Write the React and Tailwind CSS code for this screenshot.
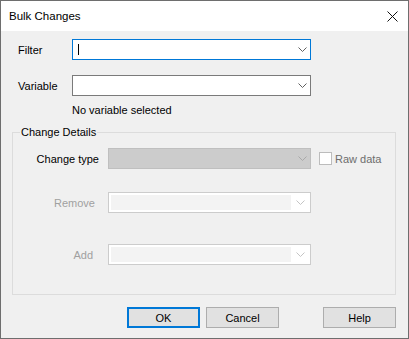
import React from 'react'

function Chevron({ color = '#606060' }) {
  return (
    <svg width="9" height="5" viewBox="0 0 9 5" className="block">
      <polyline points="0.5,0.5 4.5,4.5 8.5,0.5" fill="none" stroke={color} strokeWidth="1" />
    </svg>
  )
}

function Combo({ className = '', children, chevron }) {
  return (
    <div className={`h-[21px] flex items-center justify-between box-border ${className}`}>
      <div className="flex-1 h-full flex items-center">{children}</div>
      <div className="pr-[3px] pl-[2px]">
        <Chevron color={chevron} />
      </div>
    </div>
  )
}

function DisabledCombo() {
  return (
    <div className="w-[203px] h-[21px] border border-[#cccccc] bg-white flex items-center box-border p-[2px]">
      <div className="w-[180px] h-full bg-[#f3f3f3]" />
      <div className="flex-1 flex justify-center pl-[1px]">
        <Chevron color="#c4c4c4" />
      </div>
    </div>
  )
}

function Button({ children, primary }) {
  return (
    <button
      className={`w-[73px] h-[21px] bg-[#e1e1e1] box-border flex items-center justify-center text-black ${
        primary ? 'border-2 border-[#0078d7]' : 'border border-[#adadad]'
      }`}
    >
      {children}
    </button>
  )
}

export default function App() {
  return (
    <div className="w-[409px] h-[339px] border border-[#6e6e6e] bg-[#f0f0f0] flex flex-col box-border text-[11px] text-black font-['Liberation_Sans',Arial,sans-serif] leading-[14px]">
      {/* title bar */}
      <div className="h-[30px] bg-white flex items-center justify-between pl-[8px] pr-[10px]">
        <span className="text-[11.5px]">Bulk Changes</span>
        <svg width="11" height="11" viewBox="0 0 11 11">
          <path d="M0.5 0.5 L10.5 10.5 M10.5 0.5 L0.5 10.5" stroke="#111" strokeWidth="1" fill="none" />
        </svg>
      </div>

      <div className="flex-1 flex flex-col">
        {/* Filter */}
        <div className="mt-[8px] ml-[17px] flex items-center">
          <span className="w-[54px]">Filter</span>
          <Combo className="w-[239px] border border-[#0078d7] bg-white">
            <div className="ml-[5px] w-px h-[11px] bg-black" />
          </Combo>
        </div>

        {/* Variable */}
        <div className="mt-[15px] ml-[17px] flex items-center">
          <span className="w-[54px]">Variable</span>
          <Combo className="w-[239px] border border-[#7a7a7a] bg-white" />
        </div>

        <div className="mt-[7px] ml-[71px] h-[14px]">No variable selected</div>

        {/* Change Details group */}
        <div className="relative mt-[15px] ml-[11px] w-[384px] h-[163px] border border-[#dcdcdc] box-border flex flex-col">
          <span className="absolute left-[7px] top-[-8px] px-px bg-[#f0f0f0]">Change Details</span>

          <div className="mt-[15px] flex items-center">
            <span className="w-[86px] text-right">Change type</span>
            <Combo className="ml-[9px] w-[203px] border border-[#bfbfbf] bg-[#cccccc]" chevron="#a9a9a9" />
            <div className="ml-[8px] w-[13px] h-[13px] border border-[#bcbcbc] bg-white box-border" />
            <span className="ml-[3px] text-[#6d6d6d]">Raw data</span>
          </div>

          <div className="mt-[23px] flex items-center">
            <span className="w-[86px] pr-[4px] text-right text-[#a0a0a0]">Remove</span>
            <div className="ml-[9px]">
              <DisabledCombo />
            </div>
          </div>

          <div className="mt-[31px] flex items-center">
            <span className="w-[86px] pr-[6px] text-right text-[#a0a0a0]">Add</span>
            <div className="ml-[9px]">
              <DisabledCombo />
            </div>
          </div>
        </div>

        {/* buttons */}
        <div className="mt-[12px] ml-[126px] flex">
          <Button primary>OK</Button>
          <div className="ml-[6px]">
            <Button>Cancel</Button>
          </div>
          <div className="ml-[44px]">
            <Button>Help</Button>
          </div>
        </div>
      </div>
    </div>
  )
}
